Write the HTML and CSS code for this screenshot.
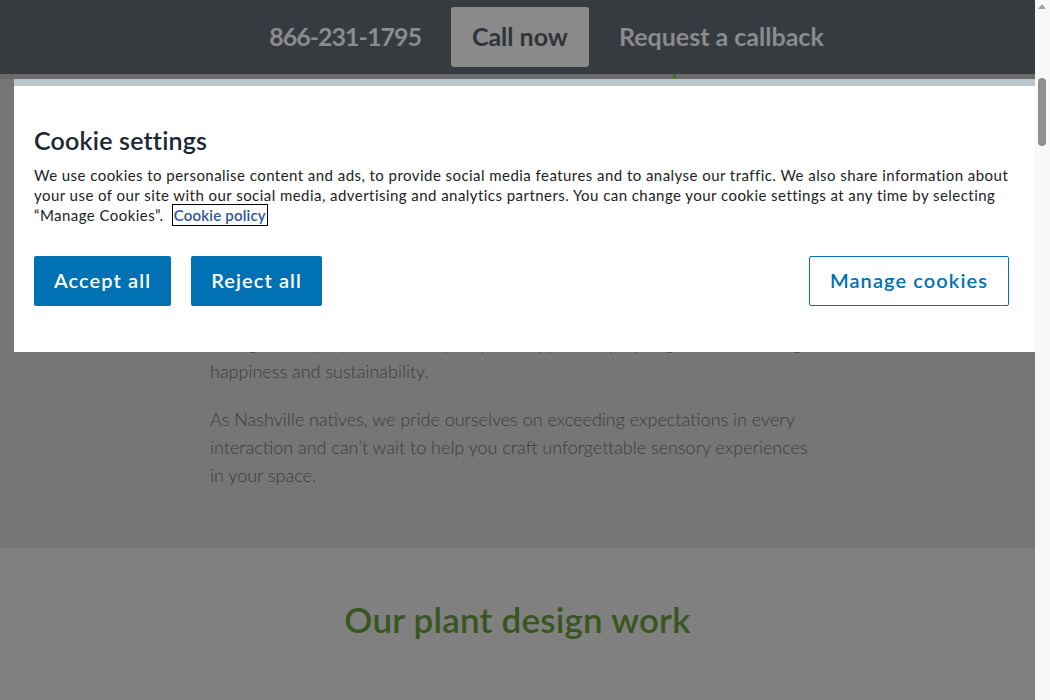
FILE: index.html
```html
<!DOCTYPE html>
<html lang="en">
<head>
  <meta charset="UTF-8">
  <title>Plant design - Cookie settings</title>
  <link rel="stylesheet" href="styles.css">
</head>
<body>
  <div class="screen">
    <div class="page">
      <header class="topbar">
        <a class="phone" href="#">866-231-1795</a>
        <a class="call-btn" href="#">Call now</a>
        <a class="callback" href="#">Request a callback</a>
      </header>
      <div class="strip"><span class="tick"></span></div>

      <section class="about">
        <p>Our team of plant designers brings living greenery into offices, hotels and public spaces across Tennessee, pairing every project with the right plants for the light, the people and the upkeep, to support employee growth, wellbeing, happiness and sustainability.</p>
        <p>As Nashville natives, we pride ourselves on exceeding expectations in every interaction and can’t wait to help you craft unforgettable sensory experiences in your space.</p>
      </section>

      <section class="work">
        <h2>Our plant design work</h2>
      </section>
    </div>

    <div class="scrollbar">
      <span class="arrow"></span>
      <span class="thumb"></span>
    </div>

    <div class="cookie-modal">
      <h1>Cookie settings</h1>
      <p>We use cookies to personalise content and ads, to provide social media features and to analyse our traffic. We also share information about your use of our site with our social media, advertising and analytics partners. You can change your cookie settings at any time by selecting “Manage Cookies”. <a href="#" class="policy">Cookie policy</a></p>
      <div class="cookie-actions">
        <button class="btn primary">Accept all</button>
        <button class="btn primary">Reject all</button>
        <button class="btn outline">Manage cookies</button>
      </div>
    </div>
  </div>
</body>
</html>
```

FILE: styles.css
```css
html, body {
  margin: 0;
  height: 100%;
  overflow: hidden;
}
body {
  font-family: Lato, "Open Sans", sans-serif;
  background: #808080;
}
.screen {
  position: relative;
  display: flex;
  width: 1050px;
  height: 700px;
}
.page {
  width: 1035px;
  display: flex;
  flex-direction: column;
}

/* top call bar */
.topbar {
  height: 74px;
  background: #363b40;
  display: flex;
  align-items: center;
  justify-content: center;
  gap: 30px;
  padding-left: 58px;
  padding-bottom: 2px;
  box-sizing: border-box;
}
.topbar a {
  text-decoration: none;
  font-size: 25px;
  font-weight: 700;
  color: #8c8c8c;
}
.topbar .phone {
  letter-spacing: -1px;
}
.call-btn {
  background: #8a8a8a;
  color: #2f3439 !important;
  padding: 0 21px;
  height: 60px;
  line-height: 58px;
  border-radius: 3px;
  margin-top: 2px;
}
.strip {
  height: 5px;
  background: #6b6b6b;
  position: relative;
}
.tick {
  position: absolute;
  left: 673px;
  top: 0;
  width: 3px;
  height: 5px;
  background: #4a6a1c;
}

/* dimmed page content */
.about {
  background: #767676;
  padding: 194px 0 58px 210px;
  height: 469px;
  box-sizing: border-box;
}
.about p {
  width: 615px;
  margin: 0 0 20px;
  font-size: 18px;
  line-height: 28px;
  font-weight: 300;
  color: #3b3b3b;
  letter-spacing: 0;
}
.work {
  flex: 1;
  background: #808080;
  text-align: center;
}
.work h2 {
  margin: 50px 0 0;
  font-size: 35px;
  font-weight: 600;
  color: #3a5620;
  letter-spacing: 0.2px;
}

/* fake scrollbar */
.scrollbar {
  width: 15px;
  background: #f8f8f8;
  position: relative;
}
.arrow {
  position: absolute;
  top: 4px;
  left: 3px;
  border-left: 4px solid transparent;
  border-right: 4px solid transparent;
  border-bottom: 5px solid #a3a3a3;
}
.thumb {
  position: absolute;
  top: 78px;
  left: 3px;
  width: 8px;
  height: 68px;
  border-radius: 4px;
  background: #8f8f8f;
}

/* cookie dialog */
.cookie-modal {
  position: absolute;
  top: 79px;
  left: 14px;
  width: 1021px;
  height: 273px;
  box-sizing: border-box;
  background: #fff;
  border-top: 7px solid #b9c7cd;
  padding: 39px 26px 0 20px;
  font-family: Lato, "Open Sans", sans-serif;
  color: #222;
}
.cookie-modal h1 {
  margin: 0 0 10px;
  font-size: 25px;
  font-weight: 600;
  color: #1b2732;
  letter-spacing: 0.2px;
}
.cookie-modal p {
  margin: 0;
  font-size: 15px;
  line-height: 20px;
  letter-spacing: 0.45px;
}
.policy {
  color: #2c5597;
  font-weight: 600;
  text-decoration: none;
  outline: 1px solid #000;
  padding: 1px 1px;
  margin-left: 5px;
  letter-spacing: 0.2px;
}
.cookie-actions {
  display: flex;
  gap: 20px;
  margin-top: 31px;
}
.btn {
  height: 50px;
  padding: 0 20px 3px;
  font-family: inherit;
  font-size: 20px;
  font-weight: 600;
  letter-spacing: 1.1px;
  border-radius: 2px;
  cursor: pointer;
}
.btn.primary {
  background: #0071b2;
  color: #fff;
  border: none;
}
.btn.outline {
  margin-left: auto;
  background: #fff;
  color: #0071b2;
  border: 1px solid #0071b2;
}
```
